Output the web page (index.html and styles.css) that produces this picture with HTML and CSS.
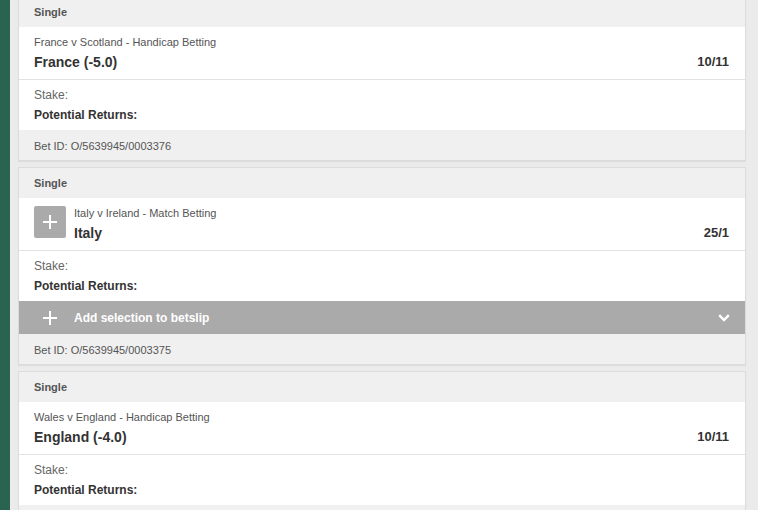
FILE: index.html
```html
<!DOCTYPE html>
<html>
<head>
<meta charset="utf-8">
<link rel="stylesheet" href="styles.css">
</head>
<body>
<div class="page">
  <div class="side"></div>
  <main class="list">
    <section class="card">
      <div class="head">Single</div>
      <div class="sel">
        <div class="sel-text">
          <div class="event">France v Scotland - Handicap Betting</div>
          <div class="name">France (-5.0)</div>
        </div>
        <div class="odds">10/11</div>
      </div>
      <div class="stake">
        <div class="stake-l">Stake:</div>
        <div class="ret">Potential Returns:</div>
      </div>
      <div class="foot">Bet ID: O/5639945/0003376</div>
    </section>

    <section class="card">
      <div class="head">Single</div>
      <div class="sel">
        <div class="addbox">
          <svg width="16" height="16" viewBox="0 0 16 16"><path d="M8 1v14M1 8h14" stroke="#fff" stroke-width="2" fill="none"/></svg>
        </div>
        <div class="sel-text">
          <div class="event">Italy v Ireland - Match Betting</div>
          <div class="name">Italy</div>
        </div>
        <div class="odds">25/1</div>
      </div>
      <div class="stake">
        <div class="stake-l">Stake:</div>
        <div class="ret">Potential Returns:</div>
      </div>
      <div class="addbar">
        <svg class="addbar-plus" width="14" height="14" viewBox="0 0 14 14"><path d="M7 0v14M0 7h14" stroke="#fff" stroke-width="2" fill="none"/></svg>
        <span class="addbar-text">Add selection to betslip</span>
        <svg class="chev" width="12" height="8" viewBox="0 0 12 8"><path d="M1.2 1.2L6 6l4.8-4.8" stroke="#fff" stroke-width="2.4" fill="none"/></svg>
      </div>
      <div class="foot">Bet ID: O/5639945/0003375</div>
    </section>

    <section class="card">
      <div class="head">Single</div>
      <div class="sel">
        <div class="sel-text">
          <div class="event">Wales v England - Handicap Betting</div>
          <div class="name">England (-4.0)</div>
        </div>
        <div class="odds">10/11</div>
      </div>
      <div class="stake">
        <div class="stake-l">Stake:</div>
        <div class="ret">Potential Returns:</div>
      </div>
      <div class="foot">Bet ID: O/5639945/0003374</div>
    </section>
  </main>
</div>
</body>
</html>
```

FILE: styles.css
```css
html, body {
  margin: 0;
  padding: 0;
  height: 100%;
  overflow: hidden;
  background: #ebebeb;
  font-family: "Liberation Sans", Arial, sans-serif;
}
.page {
  display: flex;
  height: 100%;
}
.side {
  width: 10px;
  flex: none;
  background: #2a634f;
}
.list {
  flex: 1;
  display: flex;
  flex-direction: column;
  gap: 6px;
  padding: 0 12px 0 8px;
  margin-top: -4px;
}
.card {
  border: 1px solid #dcdcdc;
  box-shadow: 0 1px 1px rgba(0,0,0,0.06);
  background: #fff;
  flex: none;
}
.head {
  height: 30px;
  line-height: 30px;
  background: #f0f0f0;
  padding: 0 15px;
  font-size: 11px;
  font-weight: bold;
  color: #555;
}
.sel {
  display: flex;
  align-items: flex-start;
  padding: 8px 16px 7px 15px;
  height: 37px;
  border-bottom: 1px solid #e2e2e2;
  background: #fff;
}
.addbox {
  width: 32px;
  height: 32px;
  border-radius: 2px;
  background: #aaaaaa;
  display: flex;
  align-items: center;
  justify-content: center;
  margin-right: 8px;
  flex: none;
}
.sel-text {
  flex: 1;
}
.event {
  font-size: 11px;
  line-height: 15px;
  color: #555;
}
.name {
  margin-top: 2px;
  font-size: 14px;
  line-height: 20px;
  font-weight: bold;
  color: #333;
}
.odds {
  margin-top: 17px;
  font-size: 13px;
  line-height: 20px;
  font-weight: bold;
  color: #333;
}
.stake {
  padding: 5px 15px;
  background: #fff;
}
.stake-l {
  font-size: 12px;
  line-height: 20px;
  color: #666;
}
.ret {
  font-size: 12px;
  line-height: 20px;
  font-weight: bold;
  color: #333;
}
.addbar {
  height: 33px;
  background: #aaaaaa;
  display: flex;
  align-items: center;
  padding: 0 15px 0 24px;
}
.addbar-plus {
  flex: none;
}
.addbar-text {
  flex: 1;
  margin-left: 17px;
  font-size: 12px;
  font-weight: bold;
  color: #fff;
}
.chev {
  flex: none;
}
.foot {
  height: 29px;
  padding-top: 1px;
  line-height: 30px;
  background: #f0f0f0;
  padding-left: 15px;
  padding-right: 15px;
  font-size: 11px;
  color: #555;
}
```
